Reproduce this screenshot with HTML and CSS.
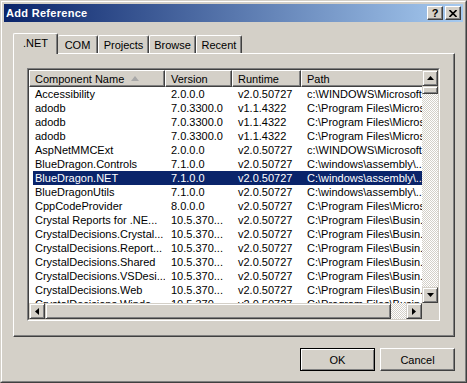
FILE: index.html
```html
<!DOCTYPE html>
<html lang="en">

<head>
  <meta charset="UTF-8">
  <meta name="viewport" content="width=device-width, initial-scale=1.0">
  <title>Add Reference</title>
  <link rel="stylesheet" href="styles.css">
</head>

<body>
  <div class="window">
    <div class="window-inner">
      <div class="titlebar">
        <span class="title">Add Reference</span>
        <div class="title-buttons">
          <button class="cap-btn help">?</button>
          <button class="cap-btn close" aria-label="Close">
            <svg width="8" height="7" viewBox="0 0 8 7"><path d="M0.5 0 L7.5 7 M7.5 0 L0.5 7" stroke="#000" stroke-width="1.6"/></svg>
          </button>
        </div>
      </div>

      <div class="dialog-body">
        <div class="tabs">
          <div class="tab active tab-net">.NET</div>
          <div class="tab tab-com">COM</div>
          <div class="tab tab-projects">Projects</div>
          <div class="tab tab-browse">Browse</div>
          <div class="tab tab-recent">Recent</div>
        </div>

        <div class="panel">
          <div class="listview">
            <div class="listview-inner">
              <div class="viewport">
                <div class="header">
                  <div class="hcell c1">Component Name
                    <svg class="sort-arrow" width="8" height="5" viewBox="0 0 8 5"><polygon points="4,0 8,5 0,5" fill="#a8a8a8"/></svg>
                  </div>
                  <div class="hcell c2">Version</div>
                  <div class="hcell c3">Runtime</div>
                  <div class="hcell c4">Path</div>
                </div>
                <div class="rows">
                  <div class="row"><span class="cell c1">Accessibility</span><span class="cell c2">2.0.0.0</span><span class="cell c3">v2.0.50727</span><span class="cell c4">c:\WINDOWS\Microsoft...</span></div>
                  <div class="row"><span class="cell c1">adodb</span><span class="cell c2">7.0.3300.0</span><span class="cell c3">v1.1.4322</span><span class="cell c4">C:\Program Files\Micros...</span></div>
                  <div class="row"><span class="cell c1">adodb</span><span class="cell c2">7.0.3300.0</span><span class="cell c3">v1.1.4322</span><span class="cell c4">C:\Program Files\Micros...</span></div>
                  <div class="row"><span class="cell c1">adodb</span><span class="cell c2">7.0.3300.0</span><span class="cell c3">v1.1.4322</span><span class="cell c4">C:\Program Files\Micros...</span></div>
                  <div class="row"><span class="cell c1">AspNetMMCExt</span><span class="cell c2">2.0.0.0</span><span class="cell c3">v2.0.50727</span><span class="cell c4">c:\WINDOWS\Microsoft...</span></div>
                  <div class="row"><span class="cell c1">BlueDragon.Controls</span><span class="cell c2">7.1.0.0</span><span class="cell c3">v2.0.50727</span><span class="cell c4">C:\windows\assembly\...</span></div>
                  <div class="row selected"><span class="cell c1">BlueDragon.NET</span><span class="cell c2">7.1.0.0</span><span class="cell c3">v2.0.50727</span><span class="cell c4">C:\windows\assembly\...</span></div>
                  <div class="row"><span class="cell c1">BlueDragonUtils</span><span class="cell c2">7.1.0.0</span><span class="cell c3">v2.0.50727</span><span class="cell c4">C:\windows\assembly\...</span></div>
                  <div class="row"><span class="cell c1">CppCodeProvider</span><span class="cell c2">8.0.0.0</span><span class="cell c3">v2.0.50727</span><span class="cell c4">C:\Program Files\Micros...</span></div>
                  <div class="row"><span class="cell c1">Crystal Reports for .NE...</span><span class="cell c2">10.5.370...</span><span class="cell c3">v2.0.50727</span><span class="cell c4">C:\Program Files\Busin...</span></div>
                  <div class="row"><span class="cell c1">CrystalDecisions.Crystal...</span><span class="cell c2">10.5.370...</span><span class="cell c3">v2.0.50727</span><span class="cell c4">C:\Program Files\Busin...</span></div>
                  <div class="row"><span class="cell c1">CrystalDecisions.Report...</span><span class="cell c2">10.5.370...</span><span class="cell c3">v2.0.50727</span><span class="cell c4">C:\Program Files\Busin...</span></div>
                  <div class="row"><span class="cell c1">CrystalDecisions.Shared</span><span class="cell c2">10.5.370...</span><span class="cell c3">v2.0.50727</span><span class="cell c4">C:\Program Files\Busin...</span></div>
                  <div class="row"><span class="cell c1">CrystalDecisions.VSDesi...</span><span class="cell c2">10.5.370...</span><span class="cell c3">v2.0.50727</span><span class="cell c4">C:\Program Files\Busin...</span></div>
                  <div class="row"><span class="cell c1">CrystalDecisions.Web</span><span class="cell c2">10.5.370...</span><span class="cell c3">v2.0.50727</span><span class="cell c4">C:\Program Files\Busin...</span></div>
                  <div class="row"><span class="cell c1">CrystalDecisions.Windo...</span><span class="cell c2">10.5.370...</span><span class="cell c3">v2.0.50727</span><span class="cell c4">C:\Program Files\Busin...</span></div>
                </div>
              </div>

              <div class="vscroll">
                <div class="sb-btn">
                  <svg width="7" height="4" viewBox="0 0 7 4"><polygon points="3.5,0 7,4 0,4" fill="#000"/></svg>
                </div>
                <div class="sb-thumb v"></div>
                <div class="sb-track"></div>
                <div class="sb-btn">
                  <svg width="7" height="4" viewBox="0 0 7 4"><polygon points="0,0 7,0 3.5,4" fill="#000"/></svg>
                </div>
              </div>

              <div class="hscroll">
                <div class="sb-btn">
                  <svg width="4" height="7" viewBox="0 0 4 7"><polygon points="4,0 4,7 0,3.5" fill="#000"/></svg>
                </div>
                <div class="sb-thumb h"></div>
                <div class="sb-track"></div>
                <div class="sb-btn">
                  <svg width="4" height="7" viewBox="0 0 4 7"><polygon points="0,0 4,3.5 0,7" fill="#000"/></svg>
                </div>
              </div>

              <div class="sb-corner"></div>
            </div>
          </div>
        </div>

        <div class="actions">
          <button class="btn default">OK</button>
          <button class="btn">Cancel</button>
        </div>
      </div>
    </div>
  </div>
</body>

</html>
```

FILE: styles.css
```css
* {
  box-sizing: border-box;
}

body {
  margin: 0;
  font-family: 'Liberation Sans', Arial, sans-serif;
  font-size: 11px;
  color: #000;
  background-color: #d4d0c8;
}

.window {
  width: 467px;
  height: 383px;
  border: 1px solid;
  border-color: #d4d0c8 #404040 #404040 #d4d0c8;
  background-color: #d4d0c8;
}

.window-inner {
  height: 100%;
  border: 1px solid;
  border-color: #fff #808080 #808080 #fff;
  padding: 2px;
  display: flex;
  flex-direction: column;
}

/* title bar */
.titlebar {
  height: 18px;
  display: flex;
  align-items: center;
  padding-left: 2px;
  background: linear-gradient(to right, #0a246a, #a6caf0);
}

.title {
  color: #fff;
  font-weight: bold;
  letter-spacing: 0.3px;
}

.title-buttons {
  margin-left: auto;
  display: flex;
  gap: 2px;
  margin-right: 2px;
}

.cap-btn {
  width: 16px;
  height: 14px;
  padding: 0;
  display: flex;
  justify-content: center;
  align-items: center;
  font-family: inherit;
  font-size: 11px;
  font-weight: bold;
  line-height: 1;
  color: #000;
  background-color: #d4d0c8;
  border: 1px solid;
  border-color: #fff #404040 #404040 #fff;
  box-shadow: inset -1px -1px #808080;
}

/* dialog body */
.dialog-body {
  flex: 1;
  display: flex;
  flex-direction: column;
  padding: 11px 8px 0 9px;
}

.tabs {
  height: 20px;
  display: flex;
  align-items: flex-end;
  position: relative;
  z-index: 1;
}

.tab {
  height: 18px;
  display: flex;
  justify-content: center;
  align-items: center;
  padding-top: 1px;
  border-top: 1px solid #fff;
  border-left: 1px solid #fff;
  border-right: 1px solid #404040;
  border-radius: 2px 2px 0 0;
  box-shadow: inset -1px 0 #808080;
}

.tab.active {
  height: 21px;
  margin-bottom: -1px;
  padding-top: 0;
  padding-bottom: 2px;
  background-color: #d4d0c8;
}

.tab-net { width: 45px; }
.tab-com { width: 40px; border-left: none; }
.tab-projects { width: 51px; }
.tab-browse { width: 47px; }
.tab-recent { width: 46px; }

.panel {
  height: 284px;
  border: 1px solid;
  border-color: #fff #404040 #404040 #fff;
  box-shadow: inset -1px -1px #808080;
  padding: 14px 14px 15px 13px;
}

/* list view */
.listview {
  width: 413px;
  height: 253px;
  border: 1px solid;
  border-color: #808080 #fff #fff #808080;
}

.listview-inner {
  height: 100%;
  border: 1px solid;
  border-color: #404040 #d4d0c8 #d4d0c8 #404040;
  background-color: #fff;
  display: grid;
  grid-template-columns: 393px 16px;
  grid-template-rows: 233px 16px;
}

.viewport {
  overflow: hidden;
}

.header {
  height: 17px;
  display: flex;
  background-color: #d4d0c8;
}

.hcell {
  flex-shrink: 0;
  height: 17px;
  display: flex;
  align-items: center;
  padding-left: 5px;
  white-space: nowrap;
  border: 1px solid;
  border-color: #fff #404040 #404040 #fff;
  box-shadow: inset -1px -1px #808080;
}

.sort-arrow {
  margin-left: 7px;
}

.hcell.c1 { width: 136px; }
.hcell.c2 { width: 67px; }
.hcell.c3 { width: 69px; }
.hcell.c4 { width: 135px; }

.row {
  height: 14px;
  line-height: 14px;
  margin-left: 4px;
  display: flex;
  white-space: nowrap;
}

.row.selected {
  background-color: #0a246a;
  color: #fff;
}

.cell {
  flex-shrink: 0;
  overflow: hidden;
  padding-left: 6px;
}

.cell.c1 { width: 132px; padding-left: 2px; }
.cell.c2 { width: 67px; }
.cell.c3 { width: 69px; }
.cell.c4 { width: 135px; }

/* scroll bars */
.vscroll {
  display: flex;
  flex-direction: column;
}

.hscroll {
  display: flex;
}

.sb-btn {
  width: 16px;
  height: 16px;
  flex-shrink: 0;
  display: flex;
  justify-content: center;
  align-items: center;
  background-color: #d4d0c8;
  border: 1px solid;
  border-color: #d4d0c8 #404040 #404040 #d4d0c8;
  box-shadow: inset 1px 1px #fff, inset -1px -1px #808080;
}

.sb-thumb {
  flex-shrink: 0;
  background-color: #d4d0c8;
  border: 1px solid;
  border-color: #d4d0c8 #404040 #404040 #d4d0c8;
  box-shadow: inset 1px 1px #fff, inset -1px -1px #808080;
}

.sb-thumb.v { height: 8px; }
.sb-thumb.h { width: 346px; }

.sb-track {
  flex: 1;
  background: repeating-conic-gradient(#fff 0 25%, #d4d0c8 0 50%) 0 0 / 2px 2px;
}

.sb-corner {
  background-color: #d4d0c8;
}

/* buttons */
.actions {
  margin-top: 11px;
  display: flex;
  justify-content: flex-end;
  gap: 5px;
}

.btn {
  width: 75px;
  height: 23px;
  padding: 0;
  font-family: inherit;
  font-size: 11px;
  color: #000;
  background-color: #d4d0c8;
  border: 1px solid;
  border-color: #fff #404040 #404040 #fff;
  box-shadow: inset -1px -1px #808080;
}

.btn.default {
  border-color: #000;
  box-shadow: inset 1px 1px #fff, inset -1px -1px #808080;
}
```
